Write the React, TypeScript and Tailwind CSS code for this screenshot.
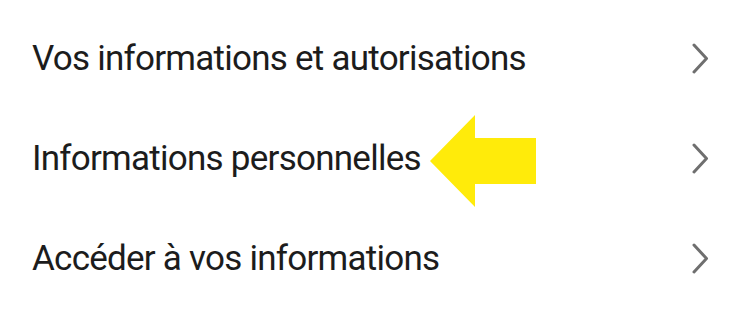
const ITEMS = [
  "Vos informations et autorisations",
  "Informations personnelles",
  "Accéder à vos informations",
];

function Chevron() {
  return (
    <svg width="17" height="31" viewBox="0 0 17 31" fill="none" className="shrink-0">
      <polyline
        points="2,2 14.5,15.5 2,29"
        stroke="#6f6f6f"
        strokeWidth="3"
        strokeLinecap="round"
        strokeLinejoin="round"
      />
    </svg>
  );
}

export default function App() {
  return (
    <div
      className="relative w-[750px] h-[309px] bg-white pt-[8px] overflow-hidden"
      style={{ fontFamily: "Roboto, 'Liberation Sans', sans-serif" }}
    >
      {ITEMS.map((label) => (
        <div key={label} className="flex items-center justify-between h-[100px] pl-[32px] pr-[41px]">
          <span className="text-[35px] leading-none tracking-[-0.75px] text-[#1c1c1c]">{label}</span>
          <Chevron />
        </div>
      ))}

      {/* yellow annotation arrow */}
      <svg
        className="absolute left-[430px] top-[115px]"
        width="106"
        height="92"
        viewBox="0 0 106 92"
      >
        <polygon points="0,46 45,0 45,23 106,23 106,69 45,69 45,92" fill="#ffeb0a" />
      </svg>
    </div>
  );
}
